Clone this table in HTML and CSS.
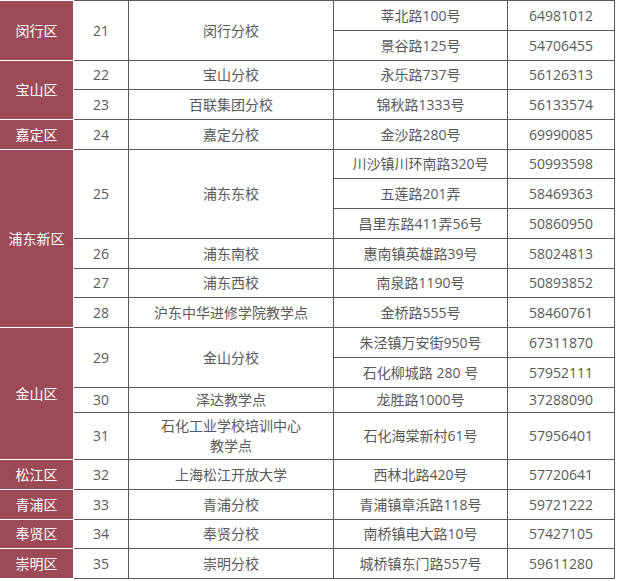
FILE: index.html
```html
<!DOCTYPE html>
<html lang="zh-CN">
<head>
<meta charset="utf-8">
<title>分校列表</title>
<link rel="stylesheet" href="styles.css">
</head>
<body>
<table class="schools">
  <tbody>
    <tr class="first">
      <td class="dist" rowspan="2">闵行区</td>
      <td class="num" rowspan="2">21</td>
      <td class="name" rowspan="2">闵行分校</td>
      <td class="addr">莘北路100号</td>
      <td class="tel">64981012</td>
    </tr>
    <tr>
      <td class="addr">景谷路125号</td>
      <td class="tel">54706455</td>
    </tr>
    <tr class="r29">
      <td class="dist" rowspan="2">宝山区</td>
      <td class="num">22</td>
      <td class="name">宝山分校</td>
      <td class="addr">永乐路737号</td>
      <td class="tel">56126313</td>
    </tr>
    <tr>
      <td class="num">23</td>
      <td class="name">百联集团分校</td>
      <td class="addr">锦秋路1333号</td>
      <td class="tel">56133574</td>
    </tr>
    <tr>
      <td class="dist">嘉定区</td>
      <td class="num">24</td>
      <td class="name">嘉定分校</td>
      <td class="addr">金沙路280号</td>
      <td class="tel">69990085</td>
    </tr>
    <tr class="r29">
      <td class="dist" rowspan="6">浦东新区</td>
      <td class="num" rowspan="3">25</td>
      <td class="name" rowspan="3">浦东东校</td>
      <td class="addr">川沙镇川环南路320号</td>
      <td class="tel">50993598</td>
    </tr>
    <tr>
      <td class="addr">五莲路201弄</td>
      <td class="tel">58469363</td>
    </tr>
    <tr>
      <td class="addr">昌里东路411弄56号</td>
      <td class="tel">50860950</td>
    </tr>
    <tr>
      <td class="num">26</td>
      <td class="name">浦东南校</td>
      <td class="addr">惠南镇英雄路39号</td>
      <td class="tel">58024813</td>
    </tr>
    <tr class="r29">
      <td class="num">27</td>
      <td class="name">浦东西校</td>
      <td class="addr">南泉路1190号</td>
      <td class="tel">50893852</td>
    </tr>
    <tr>
      <td class="num">28</td>
      <td class="name">沪东中华进修学院教学点</td>
      <td class="addr">金桥路555号</td>
      <td class="tel">58460761</td>
    </tr>
    <tr>
      <td class="dist" rowspan="4">金山区</td>
      <td class="num" rowspan="2">29</td>
      <td class="name" rowspan="2">金山分校</td>
      <td class="addr">朱泾镇万安街950号</td>
      <td class="tel">67311870</td>
    </tr>
    <tr>
      <td class="addr">石化柳城路 280 号</td>
      <td class="tel">57952111</td>
    </tr>
    <tr class="r25">
      <td class="num">30</td>
      <td class="name">泽达教学点</td>
      <td class="addr">龙胜路1000号</td>
      <td class="tel">37288090</td>
    </tr>
    <tr class="r47">
      <td class="num">31</td>
      <td class="name">石化工业学校培训中心<br>教学点</td>
      <td class="addr">石化海棠新村61号</td>
      <td class="tel">57956401</td>
    </tr>
    <tr>
      <td class="dist">松江区</td>
      <td class="num">32</td>
      <td class="name">上海松江开放大学</td>
      <td class="addr">西林北路420号</td>
      <td class="tel">57720641</td>
    </tr>
    <tr>
      <td class="dist">青浦区</td>
      <td class="num">33</td>
      <td class="name">青浦分校</td>
      <td class="addr">青浦镇章浜路118号</td>
      <td class="tel">59721222</td>
    </tr>
    <tr class="r29">
      <td class="dist">奉贤区</td>
      <td class="num">34</td>
      <td class="name">奉贤分校</td>
      <td class="addr">南桥镇电大路10号</td>
      <td class="tel">57427105</td>
    </tr>
    <tr>
      <td class="dist">崇明区</td>
      <td class="num">35</td>
      <td class="name">崇明分校</td>
      <td class="addr">城桥镇东门路557号</td>
      <td class="tel">59611280</td>
    </tr>
  </tbody>
</table>
</body>
</html>
```
FILE: styles.css
```css
html, body {
  margin: 0;
  padding: 0;
  background: #ffffff;
}

.schools {
  border-collapse: separate;
  border-spacing: 0;
  table-layout: fixed;
  width: 615px;
  font-family: "Open Sans", "Noto Sans CJK SC", sans-serif;
  font-size: 14px;
  line-height: 20px;
  color: #595959;
}

.schools tr {
  height: 30px;
}

.schools tr.first {
  height: 31px;
}

.schools tr.r29 {
  height: 29px;
}

.schools tr.r25 {
  height: 25px;
}

.schools tr.r47 {
  height: 47px;
}

.schools td {
  padding: 0;
  text-align: center;
  vertical-align: middle;
  border-right: 1px solid #595959;
  border-bottom: 1px solid #595959;
  white-space: nowrap;
}

.schools tr.first td {
  border-top: 1px solid #595959;
}

.schools td.dist {
  width: 73px;
  background: #9c4a57;
  color: #ffffff;
  border-right-color: #ffffff;
  border-bottom-color: #ffffff;
}

.schools tr.first td.dist {
  border-top-color: #ffffff;
}

.schools td.num {
  width: 54px;
}

.schools td.name {
  width: 204px;
}

.schools td.addr {
  width: 173px;
}

.schools td.tel {
  width: 106px;
}
```
